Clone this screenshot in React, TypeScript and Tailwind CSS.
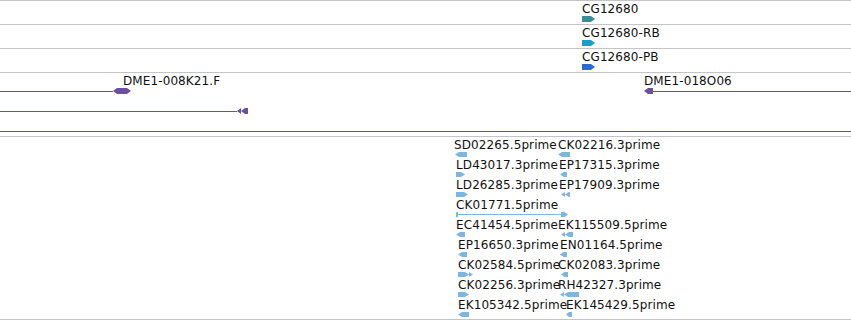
import React from "react";

type Kind = "r" | "l" | "ll" | "rr" | "hex";

function Glyph({ w, h = 6, kind, color, dx = 0 }: { w: number; h?: number; kind: Kind; color: string; dx?: number }) {
  const t = Math.min(4, w / 2);
  const m = h / 2;
  let shapes: string[] = [];
  if (kind === "r") shapes = [`0,0 ${w - t},0 ${w},${m} ${w - t},${h} 0,${h}`];
  if (kind === "l") shapes = [`0,${m} ${t},0 ${w},0 ${w},${h} ${t},${h}`];
  if (kind === "ll")
    shapes = [`0,${m} ${t},0 ${t},${h}`, `${t},${m} ${2 * t},0 ${w},0 ${w},${h} ${2 * t},${h}`];
  if (kind === "rr")
    shapes = [`0,0 ${w - 2 * t},0 ${w - t},${m} ${w - 2 * t},${h} 0,${h}`, `${w - t},0 ${w},${m} ${w - t},${h}`];
  if (kind === "hex") shapes = [`0,${m} ${t},0 ${w - t},0 ${w},${m} ${w - t},${h} ${t},${h}`];
  return (
    <svg className="block shrink-0" style={{ marginLeft: dx }} width={w} height={h} viewBox={`0 0 ${w} ${h}`}>
      {shapes.map((p, i) => (
        <polygon key={i} points={p} fill={color} />
      ))}
    </svg>
  );
}

/* A feature on the genome canvas: its x position is the data itself. */
function Feature({
  x,
  text,
  children,
}: {
  x: number;
  text?: string;
  children?: React.ReactNode;
}) {
  return (
    <div className="absolute top-[2px] flex flex-col items-start" style={{ left: x }}>
      {text && (
        <span className="whitespace-nowrap text-[12px] leading-[13px] tracking-[0.1px] text-[#111]">{text}</span>
      )}
      {children}
    </div>
  );
}

const EST = "#7db6de";
const PURPLE = "#6a4fa3";

const estRows: { x: number; text: string; gx: number; gw: number; kind: Kind }[][] = [
  [
    { x: 454, text: "SD02265.5prime", gx: 455, gw: 12, kind: "l" },
    { x: 558, text: "CK02216.3prime", gx: 558, gw: 12, kind: "l" },
  ],
  [
    { x: 456, text: "LD43017.3prime", gx: 456, gw: 9, kind: "r" },
    { x: 559, text: "EP17315.3prime", gx: 560, gw: 7, kind: "l" },
  ],
  [
    { x: 456, text: "LD26285.3prime", gx: 456, gw: 12, kind: "r" },
    { x: 559, text: "EP17909.3prime", gx: 561, gw: 9, kind: "ll" },
  ],
  [],
  [
    { x: 456, text: "EC41454.5prime", gx: 456, gw: 9, kind: "l" },
    { x: 558, text: "EK115509.5prime", gx: 561, gw: 12, kind: "ll" },
  ],
  [
    { x: 458, text: "EP16650.3prime", gx: 458, gw: 9, kind: "l" },
    { x: 560, text: "EN01164.5prime", gx: 560, gw: 7, kind: "l" },
  ],
  [
    { x: 458, text: "CK02584.5prime", gx: 458, gw: 15, kind: "rr" },
    { x: 558, text: "CK02083.3prime", gx: 561, gw: 7, kind: "l" },
  ],
  [
    { x: 458, text: "CK02256.3prime", gx: 458, gw: 11, kind: "r" },
    { x: 558, text: "RH42327.3prime", gx: 560, gw: 19, kind: "ll" },
  ],
  [
    { x: 458, text: "EK105342.5prime", gx: 458, gw: 11, kind: "l" },
    { x: 566, text: "EK145429.5prime", gx: 566, gw: 6, kind: "l" },
  ],
];

const transcripts = [
  { text: "CG12680", color: "#3a8c96" },
  { text: "CG12680-RB", color: "#19a0c2" },
  { text: "CG12680-PB", color: "#2c6ad2" },
];

export default function App() {
  return (
    <div
      className="h-[320px] w-[851px] overflow-hidden bg-white"
      style={{ fontFamily: '"DejaVu Sans", Verdana, sans-serif' }}
    >
      <div className="flex flex-col border-t border-[#c4c4c4]">
        {transcripts.map((t) => (
          <div key={t.text} className="relative h-[24px] border-b border-[#c4c4c4]">
            <Feature x={582} text={t.text}>
              <Glyph w={13} kind="r" color={t.color} />
            </Feature>
          </div>
        ))}

        {/* clone track */}
        <div className="relative flex h-[64px] flex-col border-b border-[#c4c4c4] pt-[15px]">
          <Feature x={123} text="DME1-008K21.F" />
          <Feature x={644} text="DME1-018O06" />
          <div className="flex h-[20px] shrink-0 items-start">
            <div className="flex h-[6px] w-[131px] items-center">
              <div className="h-px w-[113px] bg-[#6a4fa3]" />
              <Glyph w={18} kind="hex" color={PURPLE} />
            </div>
            <div className="ml-[513px] flex h-[6px] flex-1 items-center">
              <Glyph w={9} kind="l" color={PURPLE} />
              <div className="h-px flex-1 bg-[#6a4fa3]" />
            </div>
          </div>
          <div className="flex h-[23px] shrink-0 items-start">
            <div className="flex h-[6px] w-[248px] items-center">
              <div className="h-px w-[237px] bg-[#6a4fa3]" />
              <Glyph w={11} kind="ll" color={PURPLE} />
            </div>
          </div>
          <div className="h-px shrink-0 bg-[#6a4fa3]" />
        </div>

        {/* EST track */}
        <div className="flex h-[183px] flex-col border-b border-[#c4c4c4]">
          {estRows.map((row, n) => (
            <div key={n} className="relative h-[20px] shrink-0">
              {n === 3 ? (
                <Feature x={456} text="CK01771.5prime">
                  <div className="flex h-[5px] w-[112px] items-center">
                    <div className="h-[5px] w-[2px] bg-[#7db6de]" />
                    <div className="h-px flex-1 bg-[#7db6de]" />
                    <Glyph w={7} h={5} kind="r" color={EST} />
                  </div>
                </Feature>
              ) : (
                row.map((f) => (
                  <Feature key={f.text} x={f.x} text={f.text}>
                    <Glyph w={f.gw} h={5} kind={f.kind} color={EST} dx={f.gx - f.x} />
                  </Feature>
                ))
              )}
            </div>
          ))}
        </div>
      </div>
    </div>
  );
}
